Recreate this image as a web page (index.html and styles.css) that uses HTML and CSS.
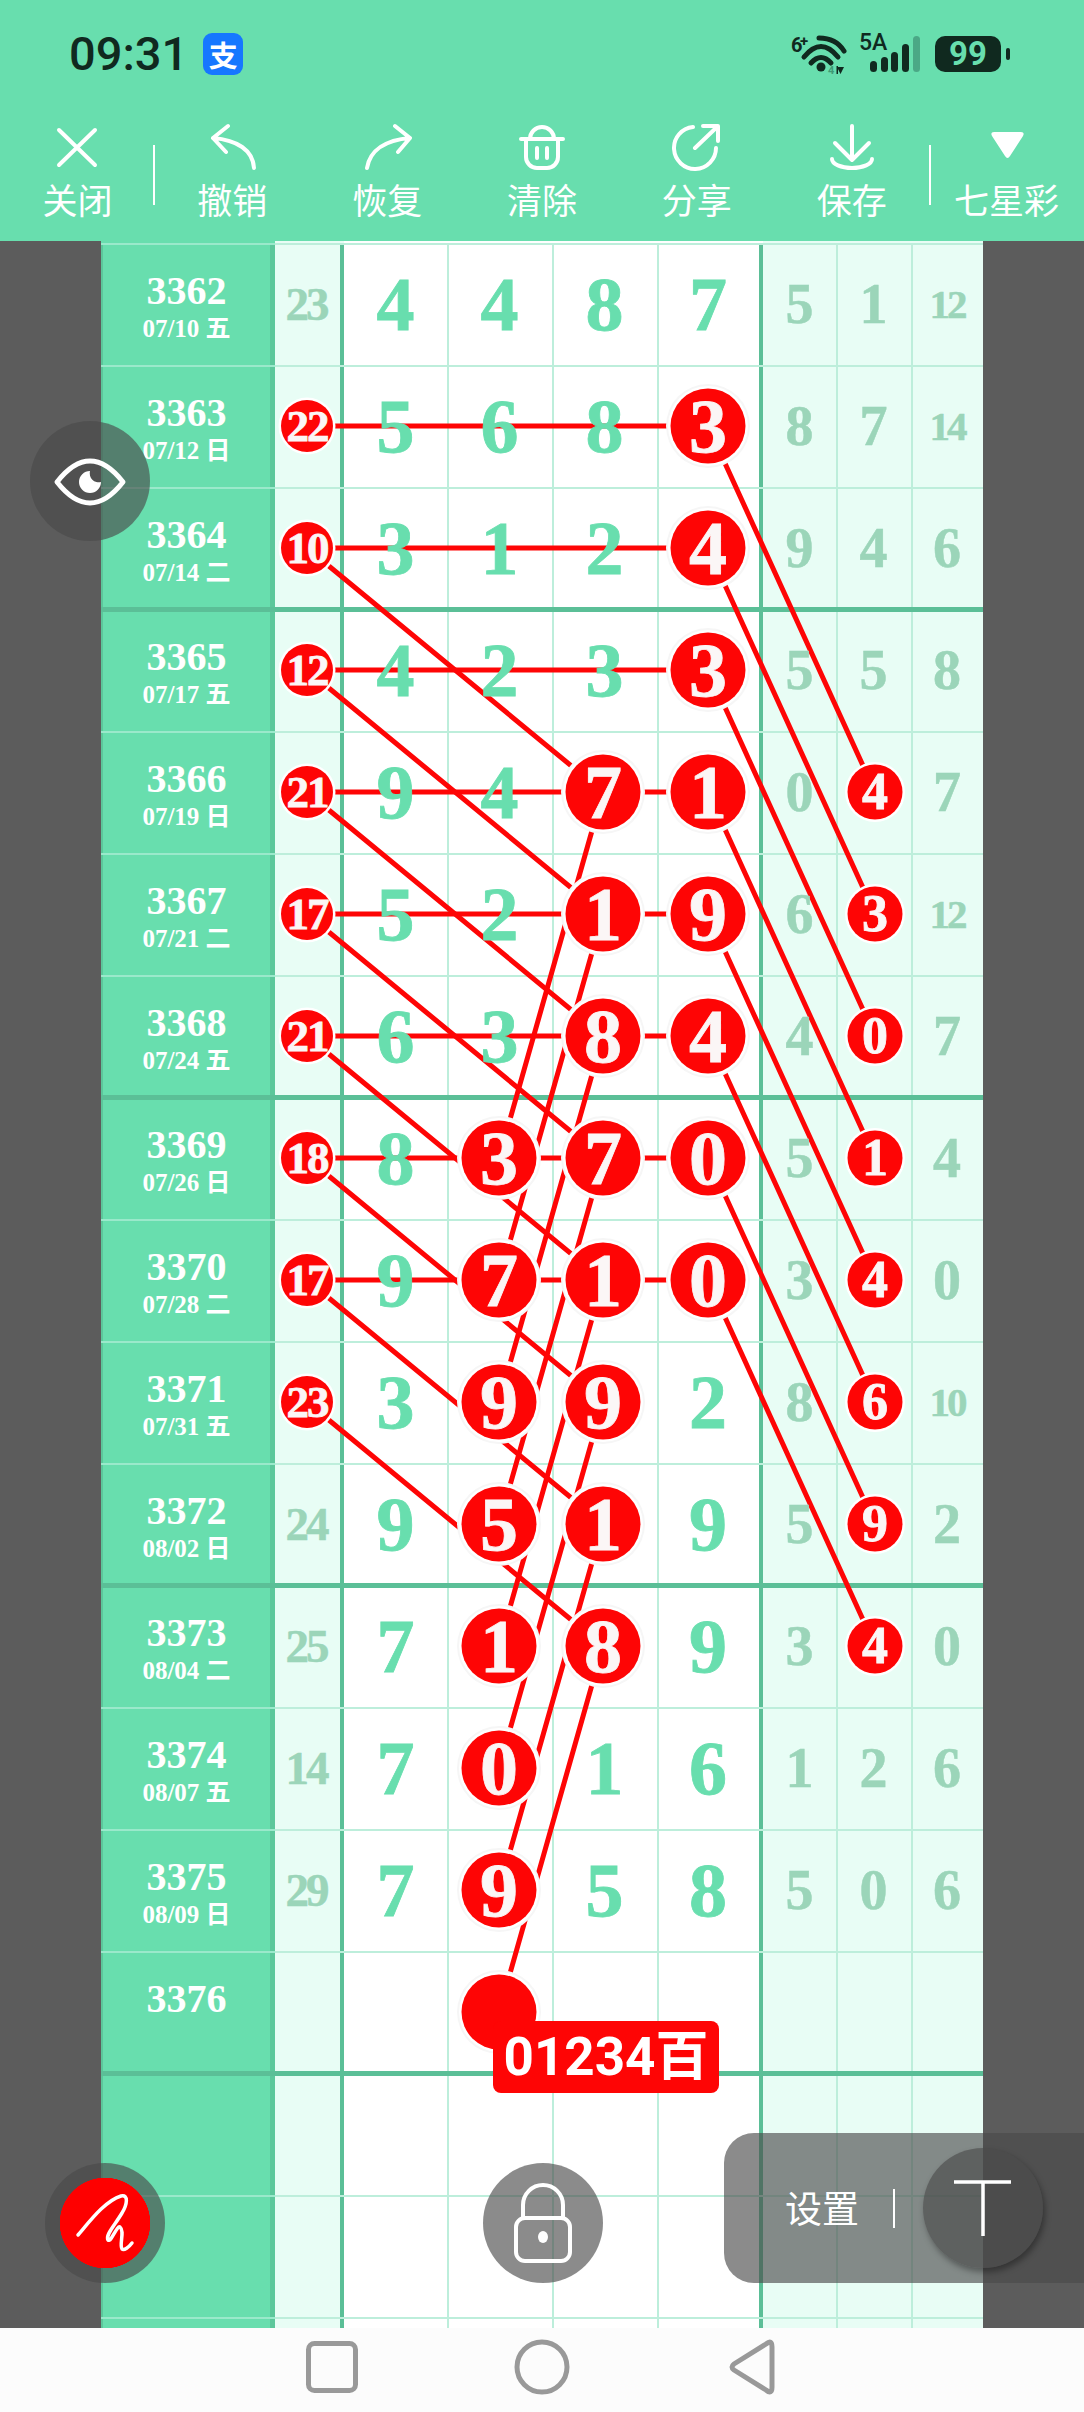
FILE: index.html
```html
<!DOCTYPE html>
<html lang="zh-CN">
<head>
    <meta charset="UTF-8">
    <meta name="viewport" content="width=device-width, initial-scale=1.0">
    <title>七星彩</title>
    <link rel="stylesheet" href="styles.css">
</head>
<body>
    <header class="top">
        <div class="status">
            <div class="status-left">
                <span class="time">09:31</span>
                <span class="alipay">支</span>
            </div>
            <div class="status-right">
                <svg class="wifi" width="70" height="50" viewBox="0 0 70 50">
                    <text x="7" y="22" class="wifi-six">6</text>
                    <text x="16" y="16" class="wifi-plus">+</text>
                    <path d="M27 33 Q37 22 47 33 M20 27 Q37 6 54 27 M35 8 Q52 8 60 21" fill="none" stroke="#10291f" stroke-width="5" stroke-linecap="round"/>
                    <circle cx="37" cy="37" r="4.5" fill="#10291f"/>
                    <text x="44" y="44" class="wifi-four">4</text>
                    <path d="M53 37 L60 37 L56.5 44 Z M52.5 36 H54 V44 H52.5 Z" fill="#10291f"/>
                </svg>
                <div class="cell-signal">
                    <span class="five-a">5A</span>
                    <i class="bar bar1"></i><i class="bar bar2"></i><i class="bar bar3"></i><i class="bar bar4"></i><i class="bar bar5"></i>
                </div>
                <div class="battery"><span>99</span></div>
                <i class="battery-tail"></i>
            </div>
        </div>
        <nav class="tools">
            <div class="tool tool-sep-r">
                <svg class="ico" viewBox="0 0 50 50"><path d="M7 8 L43 43 M43 8 L7 43"/></svg>
                <span>关闭</span>
            </div>
            <div class="tool">
                <svg class="ico" viewBox="0 0 50 50"><path d="M21 4 L6 16 L19 30 M6 16 C30 18 46 28 47 46"/></svg>
                <span>撤销</span>
            </div>
            <div class="tool">
                <svg class="ico" viewBox="0 0 50 50"><path d="M5 46 C8 28 24 18 48 16 M33 4 L48 16 L36 30"/></svg>
                <span>恢复</span>
            </div>
            <div class="tool">
                <svg class="ico" viewBox="0 0 50 50"><path d="M13 17 a12 12 0 0 1 24 0 M4 17 H46 M9 17 V35 a11 11 0 0 0 11 11 h10 a11 11 0 0 0 11 -11 V17 M20 26 v10 M30 26 v10"/></svg>
                <span>清除</span>
            </div>
            <div class="tool">
                <svg class="ico" viewBox="0 0 50 50"><path d="M21 5 A21 21 0 1 0 44 26 M23 26 L45 5 M31 4 H46 V19"/></svg>
                <span>分享</span>
            </div>
            <div class="tool">
                <svg class="ico" viewBox="0 0 50 50"><path d="M25 4 V38 M8 21 L25 38 L42 21 M5 37 A20 9 0 0 0 45 37"/></svg>
                <span>保存</span>
            </div>
            <div class="tool tool-sep-l">
                <svg class="ico" viewBox="0 0 50 50"><path class="solid" d="M12 10 H39 Q43 10 41 14 L28 34 Q25.5 38 23 34 L10 14 Q8 10 12 10 Z"/></svg>
                <span>七星彩</span>
            </div>
        </nav>
    </header>

    <main class="stage">
        <div class="board">
            <div class="row"><div class="cell lab"><b>3362</b><span>07/10 五</span></div><div class="cell blue"><span>23</span></div><div class="cell m"><span>4</span></div><div class="cell m"><span>4</span></div><div class="cell m"><span>8</span></div><div class="cell m m4"><span>7</span></div><div class="cell l"><span>5</span></div><div class="cell l"><span>1</span></div><div class="cell l l3"><span class="two">12</span></div></div>
            <div class="row"><div class="cell lab"><b>3363</b><span>07/12 日</span></div><div class="cell blue"></div><div class="cell m"><span>5</span></div><div class="cell m"><span>6</span></div><div class="cell m"><span>8</span></div><div class="cell m m4"></div><div class="cell l"><span>8</span></div><div class="cell l"><span>7</span></div><div class="cell l l3"><span class="two">14</span></div></div>
            <div class="row"><div class="cell lab"><b>3364</b><span>07/14 二</span></div><div class="cell blue"></div><div class="cell m"><span>3</span></div><div class="cell m"><span>1</span></div><div class="cell m"><span>2</span></div><div class="cell m m4"></div><div class="cell l"><span>9</span></div><div class="cell l"><span>4</span></div><div class="cell l l3"><span>6</span></div></div>

            <div class="row sec"><div class="cell lab"><b>3365</b><span>07/17 五</span></div><div class="cell blue"></div><div class="cell m"><span>4</span></div><div class="cell m"><span>2</span></div><div class="cell m"><span>3</span></div><div class="cell m m4"></div><div class="cell l"><span>5</span></div><div class="cell l"><span>5</span></div><div class="cell l l3"><span>8</span></div></div>
            <div class="row"><div class="cell lab"><b>3366</b><span>07/19 日</span></div><div class="cell blue"></div><div class="cell m"><span>9</span></div><div class="cell m"><span>4</span></div><div class="cell m"></div><div class="cell m m4"></div><div class="cell l"><span>0</span></div><div class="cell l"></div><div class="cell l l3"><span>7</span></div></div>
            <div class="row"><div class="cell lab"><b>3367</b><span>07/21 二</span></div><div class="cell blue"></div><div class="cell m"><span>5</span></div><div class="cell m"><span>2</span></div><div class="cell m"></div><div class="cell m m4"></div><div class="cell l"><span>6</span></div><div class="cell l"></div><div class="cell l l3"><span class="two">12</span></div></div>
            <div class="row"><div class="cell lab"><b>3368</b><span>07/24 五</span></div><div class="cell blue"></div><div class="cell m"><span>6</span></div><div class="cell m"><span>3</span></div><div class="cell m"></div><div class="cell m m4"></div><div class="cell l"><span>4</span></div><div class="cell l"></div><div class="cell l l3"><span>7</span></div></div>

            <div class="row sec"><div class="cell lab"><b>3369</b><span>07/26 日</span></div><div class="cell blue"></div><div class="cell m"><span>8</span></div><div class="cell m"></div><div class="cell m"></div><div class="cell m m4"></div><div class="cell l"><span>5</span></div><div class="cell l"></div><div class="cell l l3"><span>4</span></div></div>
            <div class="row"><div class="cell lab"><b>3370</b><span>07/28 二</span></div><div class="cell blue"></div><div class="cell m"><span>9</span></div><div class="cell m"></div><div class="cell m"></div><div class="cell m m4"></div><div class="cell l"><span>3</span></div><div class="cell l"></div><div class="cell l l3"><span>0</span></div></div>
            <div class="row"><div class="cell lab"><b>3371</b><span>07/31 五</span></div><div class="cell blue"></div><div class="cell m"><span>3</span></div><div class="cell m"></div><div class="cell m"></div><div class="cell m m4"><span>2</span></div><div class="cell l"><span>8</span></div><div class="cell l"></div><div class="cell l l3"><span class="two">10</span></div></div>
            <div class="row"><div class="cell lab"><b>3372</b><span>08/02 日</span></div><div class="cell blue"><span>24</span></div><div class="cell m"><span>9</span></div><div class="cell m"></div><div class="cell m"></div><div class="cell m m4"><span>9</span></div><div class="cell l"><span>5</span></div><div class="cell l"></div><div class="cell l l3"><span>2</span></div></div>

            <div class="row sec"><div class="cell lab"><b>3373</b><span>08/04 二</span></div><div class="cell blue"><span>25</span></div><div class="cell m"><span>7</span></div><div class="cell m"></div><div class="cell m"></div><div class="cell m m4"><span>9</span></div><div class="cell l"><span>3</span></div><div class="cell l"></div><div class="cell l l3"><span>0</span></div></div>
            <div class="row"><div class="cell lab"><b>3374</b><span>08/07 五</span></div><div class="cell blue"><span>14</span></div><div class="cell m"><span>7</span></div><div class="cell m"></div><div class="cell m"><span>1</span></div><div class="cell m m4"><span>6</span></div><div class="cell l"><span>1</span></div><div class="cell l"><span>2</span></div><div class="cell l l3"><span>6</span></div></div>
            <div class="row"><div class="cell lab"><b>3375</b><span>08/09 日</span></div><div class="cell blue"><span>29</span></div><div class="cell m"><span>7</span></div><div class="cell m"></div><div class="cell m"><span>5</span></div><div class="cell m m4"><span>8</span></div><div class="cell l"><span>5</span></div><div class="cell l"><span>0</span></div><div class="cell l l3"><span>6</span></div></div>
            <div class="row"><div class="cell lab"><b>3376</b><span></span></div><div class="cell blue"></div><div class="cell m"></div><div class="cell m"></div><div class="cell m"></div><div class="cell m m4"></div><div class="cell l"></div><div class="cell l"></div><div class="cell l l3"></div></div>

            <div class="row sec"><div class="cell lab"></div><div class="cell blue"></div><div class="cell m"></div><div class="cell m"></div><div class="cell m"></div><div class="cell m m4"></div><div class="cell l"></div><div class="cell l"></div><div class="cell l l3"></div></div>
            <div class="row"><div class="cell lab"></div><div class="cell blue"></div><div class="cell m"></div><div class="cell m"></div><div class="cell m"></div><div class="cell m m4"></div><div class="cell l"></div><div class="cell l"></div><div class="cell l l3"></div></div>
            <div class="row"><div class="cell lab"></div><div class="cell blue"></div><div class="cell m"></div><div class="cell m"></div><div class="cell m"></div><div class="cell m m4"></div><div class="cell l"></div><div class="cell l"></div><div class="cell l l3"></div></div>
        </div>

        <!-- trend lines, under the digits -->
        <svg class="links" width="1084" height="2087" viewBox="0 241 1084 2087">
            <!-- same row -->
            <path d="M307 426 H708 M307 548 H708 M307 670 H708 M307 792 H708 M307 914 H708 M307 1036 H708 M307 1158 H708 M307 1280 H708"/>
            <!-- left column to third column -->
            <path d="M307 548 L603 792 M307 670 L603 914 M307 792 L603 1036 M307 914 L603 1158 M307 1036 L603 1280 M307 1158 L603 1402 M307 1280 L603 1524 M307 1402 L603 1646"/>
            <!-- third column to second -->
            <path d="M603 792 L499 1158 M603 914 L499 1280 M603 1036 L499 1402 M603 1158 L499 1524 M603 1280 L499 1646 M603 1402 L499 1768 M603 1524 L499 1890 M603 1646 L499 2012"/>
            <!-- fourth column to right side -->
            <path d="M708 426 L875 792 M708 548 L875 914 M708 670 L875 1036 M708 792 L875 1158 M708 914 L875 1280 M708 1036 L875 1402 M708 1158 L875 1524 M708 1280 L875 1646"/>
        </svg>

        <!-- marked balls, over the digits -->
        <svg class="balls" width="1084" height="2087" viewBox="0 241 1084 2087">
            <defs>
                <g id="big"><circle r="42" fill="#f6f6f6"/><circle r="40" fill="#fff"/><circle r="37.5" fill="#fe0505"/></g>
                <g id="left"><circle r="28.5" fill="#fff"/><circle r="26" fill="#fe0505"/></g>
                <g id="small"><circle r="30" fill="#fff"/><circle r="27.5" fill="#fe0505"/></g>
            </defs>

            <g transform="translate(307 426)"><use href="#left"/><text class="t-two" y="15">22</text></g>
            <g transform="translate(307 548)"><use href="#left"/><text class="t-two" y="15">10</text></g>
            <g transform="translate(307 670)"><use href="#left"/><text class="t-two" y="15">12</text></g>
            <g transform="translate(307 792)"><use href="#left"/><text class="t-two" y="15">21</text></g>
            <g transform="translate(307 914)"><use href="#left"/><text class="t-two" y="15">17</text></g>
            <g transform="translate(307 1036)"><use href="#left"/><text class="t-two" y="15">21</text></g>
            <g transform="translate(307 1158)"><use href="#left"/><text class="t-two" y="15">18</text></g>
            <g transform="translate(307 1280)"><use href="#left"/><text class="t-two" y="15">17</text></g>
            <g transform="translate(307 1402)"><use href="#left"/><text class="t-two" y="15">23</text></g>

            <g transform="translate(708 426)"><use href="#big"/><text class="t-big" y="26">3</text></g>
            <g transform="translate(708 548)"><use href="#big"/><text class="t-big" y="26">4</text></g>
            <g transform="translate(708 670)"><use href="#big"/><text class="t-big" y="26">3</text></g>
            <g transform="translate(708 792)"><use href="#big"/><text class="t-big" y="26">1</text></g>
            <g transform="translate(708 914)"><use href="#big"/><text class="t-big" y="26">9</text></g>
            <g transform="translate(708 1036)"><use href="#big"/><text class="t-big" y="26">4</text></g>
            <g transform="translate(708 1158)"><use href="#big"/><text class="t-big" y="26">0</text></g>
            <g transform="translate(708 1280)"><use href="#big"/><text class="t-big" y="26">0</text></g>

            <g transform="translate(603 792)"><use href="#big"/><text class="t-big" y="26">7</text></g>
            <g transform="translate(603 914)"><use href="#big"/><text class="t-big" y="26">1</text></g>
            <g transform="translate(603 1036)"><use href="#big"/><text class="t-big" y="26">8</text></g>
            <g transform="translate(603 1158)"><use href="#big"/><text class="t-big" y="26">7</text></g>
            <g transform="translate(603 1280)"><use href="#big"/><text class="t-big" y="26">1</text></g>
            <g transform="translate(603 1402)"><use href="#big"/><text class="t-big" y="26">9</text></g>
            <g transform="translate(603 1524)"><use href="#big"/><text class="t-big" y="26">1</text></g>
            <g transform="translate(603 1646)"><use href="#big"/><text class="t-big" y="26">8</text></g>

            <g transform="translate(499 1158)"><use href="#big"/><text class="t-big" y="26">3</text></g>
            <g transform="translate(499 1280)"><use href="#big"/><text class="t-big" y="26">7</text></g>
            <g transform="translate(499 1402)"><use href="#big"/><text class="t-big" y="26">9</text></g>
            <g transform="translate(499 1524)"><use href="#big"/><text class="t-big" y="26">5</text></g>
            <g transform="translate(499 1646)"><use href="#big"/><text class="t-big" y="26">1</text></g>
            <g transform="translate(499 1768)"><use href="#big"/><text class="t-big" y="26">0</text></g>
            <g transform="translate(499 1890)"><use href="#big"/><text class="t-big" y="26">9</text></g>
            <g transform="translate(499 2012)"><use href="#big"/></g>

            <g transform="translate(875 792)"><use href="#small"/><text class="t-one" y="17">4</text></g>
            <g transform="translate(875 914)"><use href="#small"/><text class="t-one" y="17">3</text></g>
            <g transform="translate(875 1036)"><use href="#small"/><text class="t-one" y="17">0</text></g>
            <g transform="translate(875 1158)"><use href="#small"/><text class="t-one" y="17">1</text></g>
            <g transform="translate(875 1280)"><use href="#small"/><text class="t-one" y="17">4</text></g>
            <g transform="translate(875 1402)"><use href="#small"/><text class="t-one" y="17">6</text></g>
            <g transform="translate(875 1524)"><use href="#small"/><text class="t-one" y="17">9</text></g>
            <g transform="translate(875 1646)"><use href="#small"/><text class="t-one" y="17">4</text></g>
        </svg>
    </main>

    <div class="tag">01234百</div>

    <button class="round eye">
        <svg width="120" height="120" viewBox="0 0 120 120">
            <path d="M27 61 Q60 19 93 61 Q60 103 27 61 Z" fill="none" stroke="#fff" stroke-width="5" stroke-linejoin="round"/>
            <path d="M60 50 A11 11 0 1 0 71 61 A9 9 0 0 1 60 50 Z" fill="#fff"/>
        </svg>
    </button>

    <button class="round pen">
        <span class="pen-dot">
            <svg width="120" height="120" viewBox="0 0 120 120">
                <path d="M33 72 C45 58 60 38 76 33 C84 31 82 42 77 50 C70 62 60 72 63 77 C66 80 72 62 75 64 C80 68 74 82 77 86 C79 88 84 84 87 80" fill="none" stroke="#fff" stroke-width="3.5" stroke-linecap="round"/>
            </svg>
        </span>
    </button>

    <button class="round lock">
        <svg width="120" height="120" viewBox="0 0 120 120">
            <path d="M40 55 V42 a20 20 0 0 1 40 0 V55" fill="none" stroke="#fff" stroke-width="4"/>
            <rect x="33" y="55" width="54" height="43" rx="9" fill="none" stroke="#fff" stroke-width="4"/>
            <ellipse cx="60" cy="74" rx="5" ry="6" fill="#fff"/>
        </svg>
    </button>

    <div class="settings">
        <span class="settings-text">设置</span>
        <i class="settings-sep"></i>
        <span class="round t-btn">
            <svg width="120" height="120" viewBox="0 0 120 120"><path d="M31 34 H88 M60 34 V88" fill="none" stroke="#fff" stroke-width="3.5"/></svg>
        </span>
    </div>

    <footer class="navbar">
        <svg width="60" height="60" viewBox="0 0 60 60"><rect x="6.5" y="6.5" width="47" height="47" rx="6"/></svg>
        <svg width="60" height="60" viewBox="0 0 60 60"><circle cx="30" cy="30" r="25"/></svg>
        <svg width="60" height="60" viewBox="0 0 60 60"><path d="M44 7 Q50 2 50 10 V50 Q50 58 44 53 L12 33 Q8 30 12 27 Z"/></svg>
    </footer>
</body>
</html>
```

FILE: styles.css
```css
* {
    box-sizing: border-box;
}

body {
    margin: 0;
    width: 1084px;
    height: 2412px;
    overflow: hidden;
    position: relative;
    display: flex;
    flex-direction: column;
    background: #5c5c5c;
    font-family: "Noto Sans CJK SC", "Noto Sans", sans-serif;
}

/* top bars */
.top {
    height: 241px;
    background: #68deae;
}

.status {
    height: 122px;
    padding: 30px 74px 0 69px;
    display: flex;
    justify-content: space-between;
    align-items: flex-start;
}

.status-left {
    display: flex;
    align-items: center;
    gap: 15px;
    height: 48px;
}

.time {
    font-family: Roboto, sans-serif;
    font-weight: 500;
    font-size: 47px;
    line-height: 48px;
    color: #10291f;
}

.alipay {
    width: 40px;
    height: 42px;
    border-radius: 9px;
    background: #1677ff;
    color: #fff;
    font-size: 29px;
    line-height: 42px;
    text-align: center;
    font-weight: 700;
}

.status-right {
    display: flex;
    align-items: flex-start;
}

.wifi-six {
    font: 700 20px Roboto, sans-serif;
    fill: #10291f;
}

.wifi-plus {
    font: 700 15px Roboto, sans-serif;
    fill: #10291f;
}

.wifi-four {
    font: 700 11px Roboto, sans-serif;
    fill: #3f9a75;
}

.cell-signal {
    position: relative;
    width: 76px;
    height: 50px;
    margin-left: 5px;
}

.five-a {
    position: absolute;
    left: 0;
    top: 2px;
    font: 500 23px/22px Roboto, sans-serif;
    color: #10291f;
}

.bar {
    position: absolute;
    bottom: 8px;
    width: 7px;
    border-radius: 4px;
    background: #10291f;
}

.bar1 { left: 11px; height: 11px; }
.bar2 { left: 22px; height: 15px; }
.bar3 { left: 32px; height: 20px; }
.bar4 { left: 43px; height: 28px; }
.bar5 { left: 54px; height: 36px; background: #4ba886; }

.battery {
    width: 66px;
    height: 36px;
    margin-top: 6px;
    border-radius: 10px;
    background: #10291f;
    color: #68deae;
    font: 700 33px/36px Roboto, sans-serif;
    text-align: center;
}

.battery-tail {
    width: 4px;
    height: 12px;
    margin: 18px 0 0 5px;
    border-radius: 2px;
    background: #10291f;
}

.tools {
    display: flex;
    height: 119px;
}

.tool {
    flex: 1;
    position: relative;
    display: flex;
    flex-direction: column;
    align-items: center;
    color: #fff;
    font-size: 35px;
    line-height: 40px;
}

.tool span {
    margin-top: 7px;
}

.ico {
    width: 50px;
    height: 50px;
    fill: none;
    stroke: #fff;
    stroke-width: 4;
    stroke-linecap: round;
    stroke-linejoin: round;
}

.ico .solid {
    fill: #fff;
    stroke: none;
}

.tool-sep-r::after,
.tool-sep-l::after {
    content: "";
    position: absolute;
    top: 23px;
    width: 2px;
    height: 60px;
    background: #fff;
}

.tool-sep-r::after { right: 0; }
.tool-sep-l::after { left: 0; }

/* board */
.stage {
    position: relative;
    flex: 1;
    overflow: hidden;
    padding-left: 101px;
}

.board {
    width: 882px;
    padding-top: 2px;
    background: linear-gradient(to right, #68deae 174px, #e8fdf5 174px 243px, #fff 243px 662px, #e8fdf5 662px);
}

.row {
    display: grid;
    grid-template-columns: 174px 69px 103px 105px 105px 106px 73px 75px 72px;
    height: 122px;
}

.cell {
    --top: inset 0 2px 0 #bdeedb;
    --side: inset 2px 0 0 #bdeedb;
    display: flex;
    align-items: center;
    justify-content: center;
    box-shadow: var(--top), var(--side);
    font-family: "Liberation Serif", "Noto Sans CJK SC", serif;
    font-weight: 700;
}

.cell span {
    position: relative;
    z-index: 2;
}

.row.sec .cell {
    --top: 0 -2px 0 #5bbf97, inset 0 3px 0 #5bbf97;
}

.lab {
    --top: inset 0 2px 0 #9ae9cb;
    --side: inset -5px 0 0 #5cc79b, inset 2px 0 0 #5cc79b;
    flex-direction: column;
    padding: 4px 3px 0 0;
    color: #fff;
}

.lab b {
    display: block;
    font-size: 40px;
    line-height: 46px;
}

.lab span {
    display: block;
    height: 30px;
    font-size: 25px;
    line-height: 30px;
}

.blue {
    --side: inset -4px 0 0 #5bbf97;
    padding-right: 7px;
    color: #9bd5b9;
    font-size: 47px;
    letter-spacing: -3px;
    -webkit-text-stroke: 0.5px #9bd5b9;
}

.m {
    color: #68deae;
    font-size: 76px;
    -webkit-text-stroke: 0.8px #68deae;
}

.blue + .m,
.m4 + .l {
    --side: inset 0 0 0 transparent;
}

.m4 {
    --side: inset -4px 0 0 #5bbf97, inset 2px 0 0 #bdeedb;
    padding-right: 4px;
}

.l {
    color: #9bd5b9;
    font-size: 56px;
    -webkit-text-stroke: 0.5px #9bd5b9;
}

.l .two {
    font-size: 41px;
    letter-spacing: -3px;
}

/* lines and balls sit between and over the digits */
.links,
.balls {
    position: absolute;
    left: 0;
    top: 0;
}

.links {
    z-index: 1;
}

.links path {
    fill: none;
    stroke: #fe0505;
    stroke-width: 5;
}

.balls {
    z-index: 3;
}

.balls text {
    font-family: "Liberation Serif", serif;
    font-weight: 700;
    text-anchor: middle;
    fill: #fbf6f6;
    stroke: #fbf6f6;
    stroke-width: 0.8px;
}

.t-big { font-size: 76px; }
.t-two { font-size: 45px; letter-spacing: -2px; }
.t-one { font-size: 52px; }

.tag {
    position: absolute;
    z-index: 4;
    left: 493px;
    top: 2021px;
    width: 226px;
    height: 72px;
    border-radius: 8px;
    background: #fe0505;
    color: #fff;
    font: 700 53px/72px Roboto, "Noto Sans CJK SC", sans-serif;
    text-align: center;
}

/* floating buttons */
.round {
    width: 120px;
    height: 120px;
    padding: 0;
    border: 0;
    border-radius: 50%;
    background: rgba(74, 74, 74, 0.64);
    display: block;
}

.eye,
.pen,
.lock {
    position: absolute;
    z-index: 4;
}

.eye { left: 30px; top: 421px; }
.pen { left: 45px; top: 2163px; }
.lock { left: 483px; top: 2163px; }

.pen-dot {
    display: block;
    width: 120px;
    height: 120px;
    border-radius: 50%;
    background: radial-gradient(circle, #fe0000 45px, transparent 45.5px);
}

.settings {
    position: absolute;
    z-index: 4;
    left: 724px;
    top: 2133px;
    width: 360px;
    height: 150px;
    padding-left: 61px;
    border-radius: 30px 0 0 30px;
    background: rgba(74, 74, 74, 0.64);
    display: flex;
    align-items: center;
}

.settings-text {
    width: 74px;
    margin-top: -2px;
    color: #fff;
    font-size: 37px;
    line-height: 40px;
    white-space: nowrap;
}

.settings-sep {
    width: 2px;
    height: 39px;
    margin-left: 34px;
    background: #fff;
}

.t-btn {
    flex: none;
    margin-left: 28px;
    box-shadow: 2px 4px 6px rgba(0, 0, 0, 0.35);
}

.navbar {
    height: 84px;
    padding-top: 9px;
    background: #fcfcfc;
    display: flex;
    justify-content: center;
    gap: 150px;
    position: relative;
    z-index: 5;
}

.navbar svg {
    fill: none;
    stroke: #999;
    stroke-width: 5;
}
```
